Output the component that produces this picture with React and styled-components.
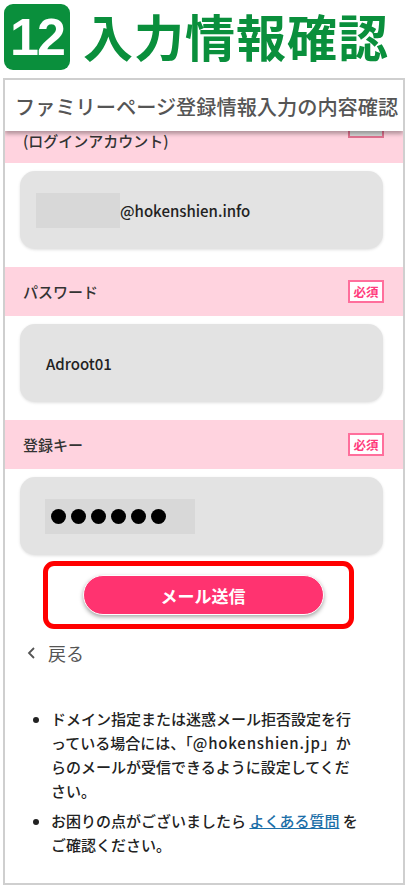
import React from 'react';
import styled, { createGlobalStyle } from 'styled-components';

const Global = createGlobalStyle`
  html, body {
    margin: 0;
    padding: 0;
    background: #fff;
  }
  body {
    font-family: "Noto Sans CJK JP", "Noto Sans", sans-serif;
    color: #222;
  }
`;

function App() {
  return (
    <Page>
      <Global />
      <TitleRow>
        <StepBadge>12</StepBadge>
        <Title>入力情報確認</Title>
      </TitleRow>
      <Frame>
        <Header>ファミリーページ登録情報入力の内容確認</Header>
        <Band $cut>
          <Label>(ログインアカウント)</Label>
          <TagEdge />
        </Band>
        <InputBox>
          <Masked $w={84} />
          <Value>@hokenshien.info</Value>
        </InputBox>
        <Band>
          <Label>パスワード</Label>
          <RequiredTag>必須</RequiredTag>
        </Band>
        <InputBox>
          <Value $pad={10}>Adroot01</Value>
        </InputBox>
        <Band>
          <Label>登録キー</Label>
          <RequiredTag>必須</RequiredTag>
        </Band>
        <InputBox>
          <Masked $w={150} $pad={9}>
            {[0, 1, 2, 3, 4, 5].map((i) => (
              <Dot key={i} />
            ))}
          </Masked>
        </InputBox>
        <Highlight>
          <SendButton>メール送信</SendButton>
        </Highlight>
        <Back>
          <svg width="12" height="14" viewBox="0 0 12 14">
            <path d="M8 2 L3 7 L8 12" fill="none" stroke="#555" strokeWidth="1.8" />
          </svg>
          <span>戻る</span>
        </Back>
        <Notes>
          <li>
            ドメイン指定または迷惑メール拒否設定を行っている場合には、「<Latin>@hokenshien.jp</Latin>」からのメールが受信できるように設定してください。
          </li>
          <li>
            お困りの点がございましたら <Link>よくある質問</Link> をご確認ください。
          </li>
        </Notes>
      </Frame>
    </Page>
  );
}

export default App;

const Page = styled.div`
  width: 410px;
  height: 888px;
  display: flex;
  flex-direction: column;
  overflow: hidden;
`;

const TitleRow = styled.div`
  display: flex;
  align-items: center;
  gap: 13px;
  padding: 4px 4px 8px 4px;
`;

const StepBadge = styled.div`
  width: 66px;
  height: 66px;
  border-radius: 9px;
  background: #0a8f3c;
  color: #fff;
  font-family: "Liberation Sans", Arial, sans-serif;
  font-weight: 700;
  font-size: 52px;
  letter-spacing: -2px;
  display: flex;
  align-items: center;
  justify-content: center;
`;

const Title = styled.div`
  color: #0a8f3c;
  font-weight: 700;
  font-size: 50px;
  line-height: 1;
  letter-spacing: 1px;
  margin-top: -4px;
`;

const Frame = styled.div`
  margin-left: 3px;
  width: 398px;
  flex: 1;
  border: 2px solid #cfcfcf;
  margin-bottom: 3px;
  display: flex;
  flex-direction: column;
  overflow: hidden;
`;

const Header = styled.div`
  position: relative;
  z-index: 1;
  height: 51px;
  flex-shrink: 0;
  display: flex;
  align-items: center;
  padding-left: 10px;
  padding-top: 2px;
  box-sizing: border-box;
  background: #fff;
  color: #555;
  font-size: 20.2px;
  font-weight: 500;
  white-space: nowrap;
  box-shadow: 0 3px 4px rgba(0, 0, 0, 0.3);
`;

const Band = styled.div`
  flex-shrink: 0;
  height: ${(p) => (p.$cut ? '32px' : '49px')};
  background: #ffd3df;
  display: flex;
  align-items: ${(p) => (p.$cut ? 'flex-start' : 'center')};
  justify-content: space-between;
  padding: 0 19px 0 18px;
  box-sizing: border-box;
  overflow: hidden;
`;

const Label = styled.div`
  font-size: 15px;
  font-weight: 500;
  color: #333;
  line-height: 20px;
`;

const RequiredTag = styled.div`
  width: 36px;
  height: 23px;
  box-sizing: border-box;
  border: 2px solid #ff6f9c;
  background: #fff;
  color: #ff3c7c;
  font-size: 12.5px;
  font-weight: 700;
  display: flex;
  align-items: center;
  justify-content: center;
`;

const TagEdge = styled.div`
  width: 36px;
  height: 7px;
  box-sizing: border-box;
  border: 2px solid #e0718f;
  border-top: none;
  background: #d9d9d9;
`;

const InputBox = styled.div`
  flex-shrink: 0;
  height: 78px;
  margin: 8px 20px 18px 15px;
  border-radius: 15px;
  background: #e3e3e3;
  box-shadow: 0 1px 3px rgba(0, 0, 0, 0.12);
  display: flex;
  align-items: center;
  padding-left: 16px;
  &:nth-of-type(1) {
    margin-top: 9px;
  }
`;

const Masked = styled.div`
  width: ${(p) => p.$w}px;
  height: 35px;
  background: #d8d8d8;
  display: flex;
  align-items: center;
  gap: 5px;
  padding-left: 6px;
  margin-left: ${(p) => p.$pad || 0}px;
  box-sizing: border-box;
`;

const Dot = styled.span`
  width: 15px;
  height: 15px;
  border-radius: 50%;
  background: #000;
`;

const Value = styled.div`
  font-size: 15px;
  font-weight: 500;
  color: #222;
  margin-left: ${(p) => p.$pad || 0}px;
`;

const Highlight = styled.div`
  flex-shrink: 0;
  margin: -12px 0 0 38px;
  width: 311px;
  height: 68px;
  box-sizing: border-box;
  border: 5px solid #ff0000;
  border-radius: 11px;
  display: flex;
  align-items: center;
  justify-content: center;
`;

const SendButton = styled.button`
  width: 241px;
  height: 40px;
  border-radius: 20px;
  border: 1px solid #fff;
  background: #ff3370;
  color: #fff;
  font-family: "Noto Sans CJK JP", sans-serif;
  font-size: 17px;
  font-weight: 700;
  box-shadow: 0 2px 4px rgba(0, 0, 0, 0.35);
  margin-left: 9px;
`;

const Back = styled.div`
  display: flex;
  align-items: center;
  gap: 10px;
  margin: 12px 0 0 21px;
  color: #555;
  font-size: 18px;
  line-height: 24px;
`;

const Notes = styled.ul`
  margin: 42px 0 0 0;
  padding: 0 0 0 46px;
  width: 310px;
  font-size: 15px;
  line-height: 24px;
  font-weight: 500;
  color: #222;
  li {
    margin-bottom: 6px;
  }
`;

const Latin = styled.span`
  letter-spacing: 0.8px;
`;

const Link = styled.span`
  color: #1b6ea8;
  text-decoration: underline;
`;
